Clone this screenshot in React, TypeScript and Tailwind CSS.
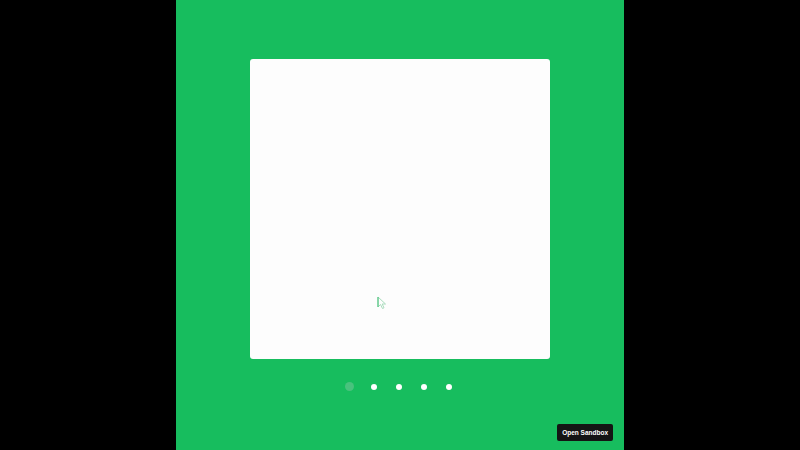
export default function App() {
  const dots = [0, 1, 2, 3, 4];
  return (
    <div className="flex h-[450px] w-full justify-center bg-black font-['Liberation_Sans',sans-serif]">
      <div className="relative flex h-full w-[448px] flex-col items-center bg-[#17bd5e] pt-[59px]">
        <div className="relative h-[300px] w-[300px] rounded-[3px] bg-[#fdfdfd]">
          {/* faint cursor left over in the capture */}
          <svg
            className="absolute left-[127px] top-[237px]"
            width="10"
            height="14"
            viewBox="0 0 10 14"
            aria-hidden
          >
            <path
              d="M1 1 L1 11 L3.5 8.5 L5.5 12.5 L7 11.8 L5.2 8 L8.5 8 Z"
              fill="#fdfdfd"
              stroke="#a9dcbd"
              strokeWidth="1"
            />
            <path d="M1 1 L1 11" stroke="#3fbf74" strokeWidth="1" />
          </svg>
        </div>

        <div className="mr-[2px] mt-[23px] flex items-center gap-[16px]">
          {dots.map((d) => (
            <span key={d} className="flex h-[9px] w-[9px] items-center justify-center">
              {d === 0 ? (
                <span className="h-[9px] w-[9px] rounded-full bg-[#49c27d]" />
              ) : (
                <span className="h-[6px] w-[6px] rounded-full bg-white" />
              )}
            </span>
          ))}
        </div>

        <button
          type="button"
          className="absolute bottom-[9px] right-[11px] flex h-[17px] items-center rounded-[2px] bg-[#141414] px-[5px] text-[6.5px] font-bold text-white"
        >
          Open Sandbox
        </button>
      </div>
    </div>
  );
}
